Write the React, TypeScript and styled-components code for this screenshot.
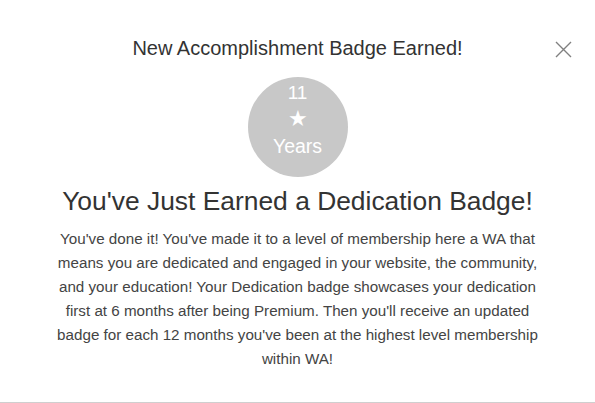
import styled, { createGlobalStyle } from 'styled-components';

const GlobalStyle = createGlobalStyle`
  html, body {
    margin: 0;
    padding: 0;
    background: #ffffff;
  }
  body {
    font-family: "Liberation Sans", Arial, sans-serif;
  }
`;

const Modal = styled.div`
  width: 595px;
  height: 403px;
  box-sizing: border-box;
  border-bottom: 1px solid #cfcfcf;
  position: relative;
  display: flex;
  flex-direction: column;
  align-items: center;
  padding-top: 36px;
`;

const Title = styled.h2`
  margin: 0;
  font-size: 20px;
  font-weight: normal;
  color: #333333;
  line-height: 24px;
`;

const CloseButton = styled.button`
  position: absolute;
  top: 41px;
  right: 23px;
  width: 17px;
  height: 17px;
  padding: 0;
  border: none;
  background: none;
  cursor: pointer;
  svg {
    display: block;
  }
`;

const Badge = styled.div`
  margin-top: 17px;
  width: 100px;
  height: 100px;
  box-sizing: border-box;
  padding-top: 6px;
  border-radius: 50%;
  background: #c8c8c8;
  color: #ffffff;
  display: flex;
  flex-direction: column;
  align-items: center;
`;

const BadgeNumber = styled.span`
  font-size: 19px;
  line-height: 20px;
`;

const BadgeStar = styled.span`
  font-size: 22px;
  line-height: 32px;
`;

const BadgeLabel = styled.span`
  font-size: 19.5px;
  line-height: 22px;
`;

const Heading = styled.h1`
  margin: 9px 0 0;
  font-size: 26.4px;
  font-weight: normal;
  color: #333333;
  line-height: 30px;
`;

const Body = styled.p`
  margin: 11px 0 0;
  width: 492px;
  text-align: center;
  font-size: 15.2px;
  line-height: 24px;
  color: #444444;
`;

export default function App() {
  return (
    <>
      <GlobalStyle />
      <Modal>
        <Title>New Accomplishment Badge Earned!</Title>
        <CloseButton aria-label="Close">
          <svg width="17" height="17" viewBox="0 0 17 17">
            <path d="M1 1 L16 16 M16 1 L1 16" stroke="#808080" strokeWidth="1.4" fill="none" />
          </svg>
        </CloseButton>
        <Badge>
          <BadgeNumber>11</BadgeNumber>
          <BadgeStar>★</BadgeStar>
          <BadgeLabel>Years</BadgeLabel>
        </Badge>
        <Heading>You've Just Earned a Dedication Badge!</Heading>
        <Body>
          You've done it! You've made it to a level of membership here a WA that means you are
          dedicated and engaged in your website, the community, and your education! Your
          Dedication badge showcases your dedication first at 6 months after being Premium. Then
          you'll receive an updated badge for each 12 months you've been at the highest level
          membership within WA!
        </Body>
      </Modal>
    </>
  );
}
